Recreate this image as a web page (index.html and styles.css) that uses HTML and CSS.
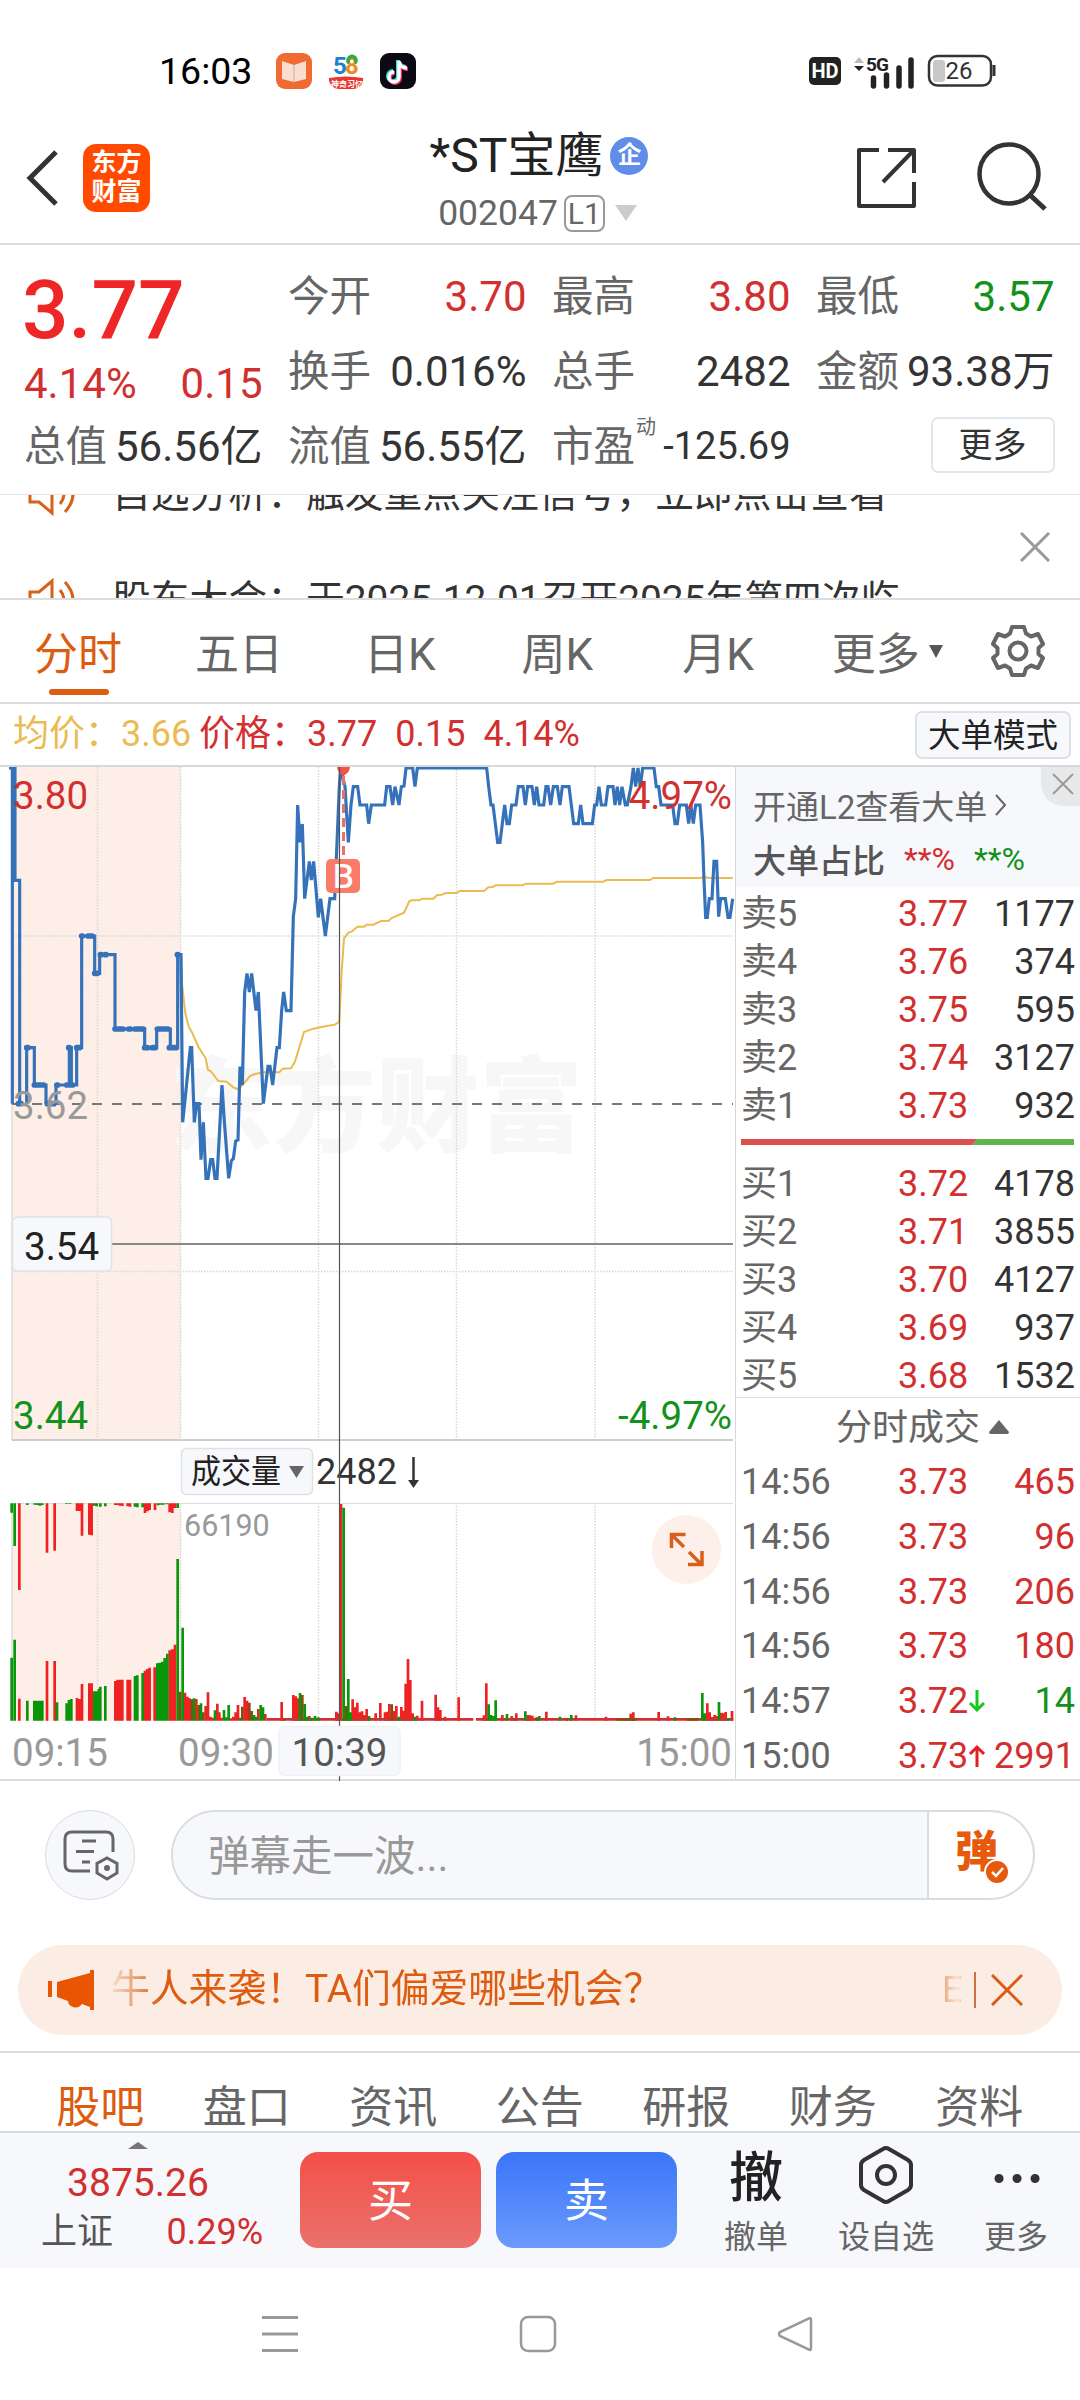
FILE: index.html
```html
<!DOCTYPE html>
<html lang="zh-CN">

<head>
    <meta charset="UTF-8">
    <meta name="viewport" content="width=device-width, initial-scale=1">
    <title>*ST宝鹰 002047</title>
    <link rel="stylesheet" href="styles.css">
</head>

<body>
    <div class="statusbar">
        <span class="clock">16:03</span>
        <svg class="appicon" width="36" height="36" viewBox="0 0 36 36">
            <rect width="36" height="36" rx="9" fill="#f26a33"/>
            <path d="M6 8l12 4 12-4v18l-12 3-12-3z" fill="#f9ded0"/>
            <path d="M18 12v17" stroke="#e3b8a4" stroke-width="1.5"/>
        </svg>
        <svg class="appicon" width="36" height="36" viewBox="0 0 36 36">
            <text x="5" y="21" font-size="24" font-weight="700" fill="#1f7fd0">5</text>
            <text x="17" y="21" font-size="24" font-weight="700" fill="#f08a1c">8</text>
            <path d="M21 10a4 4 0 1 1 6 0" fill="none" stroke="#2fae3f" stroke-width="3.500"/>
            <path d="M1 25q17-3 34 0v3q-3 8-10 8H11q-7 0-10-8z" fill="#e8382b"/>
            <text x="3" y="33.500" font-size="8" font-weight="700" fill="#fff">神奇习忆</text>
        </svg>
        <svg class="appicon" width="36" height="36" viewBox="0 0 36 36">
            <rect width="36" height="36" rx="9" fill="#0b0a14"/>
            <g fill="none" stroke-width="4">
                <path d="M18 7v16a5 5 0 1 1-5-5M18 8q2 6 8 6" stroke="#35e0dc"/>
                <path d="M20 9v16a5 5 0 1 1-5-5M20 10q2 6 8 6" stroke="#f0325a"/>
                <path d="M19 8v16a5 5 0 1 1-5-5M19 9q2 6 8 6" stroke="#fff" stroke-width="3.500"/>
            </g>
        </svg>
        <div class="phone">
            <span class="hd">HD</span>
            <svg width="62" height="38" viewBox="851 50 62 38">
                <path d="M857 55l5 6h-10z" fill="#bbb"/>
                <path d="M857 69l5-5h-10z" fill="#222"/>
                <path d="M871.500 76v8M884.500 73v11M897 66v18M909 58v26" stroke="#222" stroke-width="5.500" stroke-linecap="round"/>
                <text x="864" y="69" font-size="19" font-weight="700" fill="#222" textLength="23">5G</text>
            </svg>
            <svg width="70" height="34" viewBox="927 54 70 34">
                <rect x="933" y="60" width="12" height="22" rx="3" fill="#c8c8c8"/>
                <rect x="929" y="56" width="62" height="29.500" rx="8.500" fill="none" stroke="#333" stroke-width="2.500"/>
                <path d="M994 65v11" stroke="#333" stroke-width="3"/>
                <text x="959" y="79" font-size="24" text-anchor="middle" fill="#333">26</text>
            </svg>
        </div>
    </div>

    <header class="topbar">
        <svg class="back" width="36" height="60" viewBox="0 0 36 60"><path d="M32 4L6 30l26 26" fill="none" stroke="#333" stroke-width="5"/></svg>
        <div class="logo">东方<br>财富</div>
        <div class="stock">
            <h1>*ST宝鹰<span class="badge">企</span></h1>
            <div class="code">002047<span class="level">L1</span><svg width="22" height="16" viewBox="0 0 22 16"><path d="M0 0h22L11 16z" fill="#ccc"/></svg></div>
        </div>
        <svg class="share" width="64" height="64" viewBox="854 145 64 64">
            <path d="M879 150h-20v56h55v-24M888 150h26v23M914 150l-31 32" fill="none" stroke="#333" stroke-width="4" stroke-linejoin="round"/>
        </svg>
        <svg class="search" width="72" height="72" viewBox="976 140 72 72">
            <circle cx="1009" cy="174" r="29.500" fill="none" stroke="#333" stroke-width="4.500"/>
            <path d="M1030 195l15 14" stroke="#333" stroke-width="5"/>
        </svg>
    </header>

    <section class="quote">
        <div class="now">
            <div class="price">3.77</div>
            <div class="change red"><span>4.14%</span><span>0.15</span></div>
        </div>
        <div class="cell"><label>今开</label><b class="red">3.70</b></div>
        <div class="cell"><label>最高</label><b class="red">3.80</b></div>
        <div class="cell"><label>最低</label><b class="green">3.57</b></div>
        <div class="cell"><label>换手</label><b>0.016%</b></div>
        <div class="cell"><label>总手</label><b>2482</b></div>
        <div class="cell"><label>金额</label><b>93.38万</b></div>
        <div class="cell"><label>总值</label><b>56.56亿</b></div>
        <div class="cell"><label>流值</label><b>56.55亿</b></div>
        <div class="cell"><label>市盈<sup>动</sup></label><b class="small">-125.69</b></div>
        <div class="cell end"><span class="morebtn">更多</span></div>
    </section>

    <section class="news">
        <div class="newslist">
            <div class="newsrow">
                <svg width="54" height="44" viewBox="0 0 54 44"><path d="M3 14h9L25 3v38L12 30H3zM33 12q8 10 0 20M38 4q16 18 0 36" fill="none" stroke="#d9601a" stroke-width="3"/></svg>
                <span>自选分析：触发重点关注信号，立即点击查看</span>
            </div>
            <div class="newsrow">
                <svg width="54" height="44" viewBox="0 0 54 44"><path d="M3 14h9L25 3v38L12 30H3zM33 12q8 10 0 20M38 4q16 18 0 36" fill="none" stroke="#d9601a" stroke-width="3"/></svg>
                <span>股东大会：于2025-12-01召开2025年第四次临</span>
            </div>
        </div>
        <svg class="close" width="30" height="30" viewBox="0 0 30 30"><path d="M1 1l28 28M29 1L1 29" stroke="#999" stroke-width="3"/></svg>
    </section>

    <nav class="periods">
        <span class="active">分时</span>
        <span>五日</span>
        <span>日K</span>
        <span>周K</span>
        <span>月K</span>
        <span>更多<svg width="14" height="13" viewBox="0 0 14 13"><path d="M0 0h14L7 13z" fill="#555"/></svg></span>
        <svg class="gear" width="54" height="54" viewBox="-27 -27 54 54">
            <path d="M-6-24H6L8-17.500 13-14.500 20-17 25-7 20.500-3V3L25 7 20 17 13 14.500 8 17.500 6 24H-6L-8 17.500-13 14.500-20 17-25 7-20.500 3V-3L-25-7-20-17-13-14.500-8-17.500z" fill="none" stroke="#666" stroke-width="4" stroke-linejoin="round"/>
            <circle r="8.500" fill="none" stroke="#666" stroke-width="4"/>
        </svg>
    </nav>

    <div class="legend">
        <span class="avg">均价：3.66</span>
        <span class="cur">价格：3.77</span>
        <span class="cur">0.15</span>
        <span class="cur">4.14%</span>
        <span class="modebtn">大单模式</span>
    </div>

    <main class="board">
        <svg class="chart" width="735" height="1014" viewBox="0 767 735 1014">
            <rect x="12" y="767" width="169" height="673" fill="#fdeee7"/>
            <rect x="12" y="1503" width="169" height="218" fill="#fdeee7"/>
            <text x="169" y="1144" font-size="103" font-weight="900" fill="#f7f7f7" textLength="414" lengthAdjust="spacingAndGlyphs">东方财富</text>
            <g class="grid">
                <path d="M97.500 767V1440M180.500 767V1440M318.500 767V1440M456.500 767V1440M595 767V1440M12 936H733M12 1271.500H733"/>
                <path d="M97.500 1503V1720M180.500 1503V1720M318.500 1503V1720M456.500 1503V1720M595 1503V1720"/>
            </g>
            <path d="M12 767V1440M12 1503V1720" stroke="#ddd" stroke-width="1.500"/>
            <path d="M12 1440H733" stroke="#ccc" stroke-width="2"/>
            <path d="M12 1503.500H733" stroke="#ddd"/>
            <path d="M12 1104H733" stroke="#777" stroke-width="1.800" stroke-dasharray="10 10"/>

            <!-- average and price lines, three units per pixel -->
            <g class="lines" transform="translate(0 750) scale(.33333)">
                <path class="avgline" d="M543 614L546 700 556 790 566 830 575 845 595 890 617 925 624 960 632 963 655 993 680 995 700 1012 712 1017 725 1008 750 978 765 972 790 967 838 967 848 956 873 955 885 935 912 846 940 836 965 831 985 827 1005 824 1018 815 1025 665 1032 565 1045 548 1055 545 1072 530 1092 530 1100 524 1120 524 1143 513 1165 513 1175 504 1212 488 1228 454 1235 451 1258 451 1266 446 1300 446 1312 435 1325 434 1338 429 1370 429 1380 423 1452 423 1465 412 1478 411 1488 406 1568 406 1578 401 1660 401 1670 395 1810 395 1820 390 1950 390 1960 384 2100 384 2115 381 2125 384 2198 384"/>
                <path class="priceline" d="M27 54H37V1061H37V54H45V391H59V1061M80 1061V893H103V1005H138V1061M168 1061V1005H208V893H214V1005H230V893H245V558H284V670H299V614H345V837H434V893H470V837H511V893H533V614H543L548 1117 556 1040 571 893H575L583 1117 590 1061H597L603 1229 610 1117 618 1285H624L632 1229H638L645 1285H651L660 1117 666 1005 672 1100 686 1285 694 1232 700 1226 707 1173 714 1170 720 950 727 1005 734 726 741 670 748 726 755 670 768 782 775 726 790 1061 804 949H810L818 1005 831 893H838L845 782 851 726 859 782H873L880 500 887 446 893 165 900 277 907 222 914 446 928 334 934 390 941 334 955 502 962 446 976 558 990 446H1004L1018 110 1022 54 1035 110 1045 277 1053 165 1060 110H1073L1080 165H1100L1106 221 1114 165H1154L1160 110H1170L1178 165 1185 110 1197 165 1204 110 1212 108 1218 54H1238L1245 110 1252 54H1460L1466 110 1473 165H1479L1486 221 1493 277H1500L1507 221 1514 165 1521 221H1528L1535 165H1548L1555 110H1569L1576 165 1583 110H1596L1603 165 1610 110 1617 165H1631L1638 110H1644L1652 165 1660 110H1672L1680 165 1687 110H1707L1714 165 1721 221H1735L1742 165 1749 221H1777L1784 165H1790L1797 110 1804 165H1817L1824 110H1839L1845 165 1852 110 1859 165 1866 110 1876 165H1882L1893 110 1900 54 1907 110 1914 54 1921 110 1928 54H1962L1969 110H1976L1983 165H2018L2025 221H2032L2039 165H2059L2066 221 2073 165 2080 221 2087 165H2100L2108 277 2112 390 2117 502H2122L2128 446H2136L2142 334H2150L2156 500 2162 446H2176L2184 502H2190L2198 446"/>
                <path class="ticks" d="M55 1061h8M80 893h4M103 1005h28M142 1061h20M171 1005h2M200 1005h18M206 893h2M230 893h8M245 558h2M264 558h12M284 670h8M301 614h3M316 614h2M345 837h24M386 837h5M405 837h25M434 893h8M457 893h8M472 837h32M508 893h20M532 614h2"/>
            </g>

            <!-- volume bars, same scale -->
            <g class="bars" transform="translate(0 1490) scale(.33333)">
                <path stroke="#ee2222" d="M58 692V626M141 692V513M164 692V513M231 692V624M238 692V627M246 692V582M268 692V580M275 692V580M346 692V573M353 692V569M360 692V569M367 692V569M383 692V569M390 692V569M435 692V542M442 692V537M449 692V533M464 692V532M509 692V481M517 692V478M525 692V464M58 40V300M141 40V188M164 40V182M231 40V63M238 40V63M246 40V137M268 40V134M275 40V136M346 40V45M353 40V45M360 40V47M367 40V48M383 40V49M390 40V50M435 40V69M442 40V64M449 40V60M465 40V60M509 40V67M517 40V69M525 40V54M555 692V608M562 692V620M569 692V625M589 692V627M617 692V648M624 692V607M631 692V680M638 692V683M652 692V641M658 692V667M665 692V683M693 692V685M700 692V680M707 692V667M714 692V645M734 692V621M741 692V632M775 692V657M796 692V672M845 692V636M880 692V615M887 692V619M893 692V625M928 692V678M1009 692V665M1016 692V670M1023 692V42M1058 692V628M1065 692V652M1072 692V638M1079 692V667M1086 692V664M1093 692V675M1100 692V657M1107 692V678M1127 692V670M1141 692V639M1155 692V667M1161 692V665M1168 692V642M1182 692V663M1189 692V648M1204 692V651M1210 692V662M1217 692V581M1224 692V507M1231 692V570M1238 692V670M1252 692V677M1266 692V632M1307 692V614M1314 692V652M1321 692V660M1335 692V680M1376 692V622M1452 692V676M1459 692V580M1507 692V675M1535 692V678M1549 692V670M1583 692V675M1590 692V676M1597 692V677M1639 692V665M1728 692V676M1818 692V680M1892 692V671M1900 692V667M1976 692V666M2004 692V679M2122 692V640M2129 692V667M2136 692V681M2144 692V675M2151 692V678M2164 692V668M2171 692V670M2177 692V666M2196 692V663"/>
                <path stroke="#d03030" d="M800 688H1420M1428 688H2200" />
                <path stroke="#8a4a10" d="M541 692V605M575 692V628M596 692V645M610 692V667M727 692V650M748 692V638M755 692V663M907 692V615M1038 692V648M1175 692V643M852 692V685M1545 692V685M1610 692V682M1700 692V685M1850 688h60M2060 688h35"/>
                <path stroke="#0a960a" d="M35 692V503M44 692V449M82 692V632M103 692V632M111 692V632M119 692V632M127 692V632M171 692V637M200 692V640M207 692V630M214 692V627M283 692V604M290 692V604M297 692V596M301 692V590M316 692V588M405 692V558M412 692V556M428 692V549M472 692V520M479 692V518M487 692V515M494 692V504M502 692V491M533 692V207M548 692V413M582 692V625M603 692V640M645 692V661M672 692V660M679 692V682M686 692V645M721 692V683M762 692V675M768 692V680M782 692V645M789 692V652M900 692V609M914 692V642M921 692V680M935 692V683M945 692V678M955 692V682M1031 692V53M1045 692V567M1052 692V667M1107 692V680M1197 692V680M1245 692V680M1466 692V643M1473 692V675M1480 692V678M1487 692V631M1521 692V672M1576 692V664M1618 692V678M1680 692V680M1714 692V675M2025 692V682M2107 692V609M2114 692V670M2157 692V636M2184 692V684M35 40V68M44 40V168M82 40V45M104 40V44M112 40V45M120 40V47M127 40V45M200 40V42M210 40V42M283 40V47M290 40V49M301 40V50M316 40V49M405 40V50M412 40V52M428 40V52M474 40V46M482 40V44M490 40V44M500 40V43M533 40V54"/>
            </g>

            <text class="axis red" x="13" y="809">3.80</text>
            <text class="axis red" x="732" y="809" text-anchor="end">4.97%</text>
            <text class="axis gray" x="13" y="1118.500">3.62</text>
            <text class="axis green" x="13" y="1428.500">3.44</text>
            <text class="axis green" x="732" y="1428.500" text-anchor="end">-4.97%</text>

            <path d="M343.500 776V858" stroke="#e5736b" stroke-width="3" stroke-dasharray="9 5"/>
            <path d="M337 767h13q0 5-6.500 9-6.500-4-6.500-9z" fill="#ef5548"/>
            <rect x="326" y="859" width="34" height="34" rx="5" fill="#fb7b6b"/>
            <text x="343.500" y="887.500" font-size="33" font-weight="500" fill="#fff" text-anchor="middle">B</text>

            <rect class="tag" x="181.500" y="1448.500" width="131" height="46" rx="5"/>
            <text x="191" y="1483" font-size="33" fill="#222" textLength="90" lengthAdjust="spacingAndGlyphs">成交量</text>
            <path d="M289 1466h15l-7.500 12z" fill="#666"/>
            <text x="316" y="1484" font-size="36" fill="#333">2482</text>
            <path d="M413.500 1457v26" stroke="#333" stroke-width="2.500"/>
            <path d="M408 1480h11l-5.500 8z" fill="#333"/>
            <text x="184" y="1536" font-size="30.500" fill="#999">66190</text>

            <path d="M112 1244H733" stroke="#888" stroke-width="2"/>
            <path d="M339.500 767V1781" stroke="#555" stroke-width="1.200"/>
            <rect class="tag" x="12.500" y="1217" width="99" height="54" rx="5"/>
            <text class="axis" x="24" y="1259.500" fill="#222">3.54</text>

            <text class="axis gray" x="12" y="1766">09:15</text>
            <text class="axis gray" x="178" y="1766">09:30</text>
            <rect class="tag light" x="279" y="1726.500" width="121" height="49" rx="6"/>
            <text class="axis" x="339.500" y="1766" text-anchor="middle" fill="#555">10:39</text>
            <text class="axis gray" x="732" y="1766" text-anchor="end">15:00</text>

            <circle cx="686.500" cy="1549.500" r="34.500" fill="#fdf0ea"/>
            <path d="M671.500 1548v-13.500h14M672 1535l12 12M702 1551v13.500h-14M701 1564l-12-12" fill="none" stroke="#d95f1c" stroke-width="3.500"/>
        </svg>

        <aside class="side">
            <div class="promo">
                <div class="l2">开通L2查看大单<svg width="12" height="22" viewBox="0 0 12 22"><path d="M1 1l9 10-9 10" fill="none" stroke="#666" stroke-width="2"/></svg></div>
                <div class="ratio">大单占比<span class="red">**%</span><span class="green">**%</span></div>
                <span class="promoclose"><svg width="22" height="22" viewBox="0 0 22 22"><path d="M1 1l20 20M21 1L1 21" stroke="#999" stroke-width="2"/></svg></span>
            </div>
            <div class="orders">
                <div><i>卖5</i><b>3.77</b><u>1177</u></div>
                <div><i>卖4</i><b>3.76</b><u>374</u></div>
                <div><i>卖3</i><b>3.75</b><u>595</u></div>
                <div><i>卖2</i><b>3.74</b><u>3127</u></div>
                <div><i>卖1</i><b>3.73</b><u>932</u></div>
            </div>
            <svg class="balance" width="333" height="6" viewBox="0 0 333 6"><path d="M0 0h237l-6 6H0z" fill="#d9504e"/><path d="M237 0h96v6H231z" fill="#62b34c"/></svg>
            <div class="orders">
                <div><i>买1</i><b>3.72</b><u>4178</u></div>
                <div><i>买2</i><b>3.71</b><u>3855</u></div>
                <div><i>买3</i><b>3.70</b><u>4127</u></div>
                <div><i>买4</i><b>3.69</b><u>937</u></div>
                <div><i>买5</i><b>3.68</b><u>1532</u></div>
            </div>
            <div class="dealtitle">分时成交<svg width="20" height="15" viewBox="0 0 20 15"><path d="M10 0l10 12q0 2-2 2H2q-2 0-2-2z" fill="#666"/></svg></div>
            <div class="orders deals">
                <div><i>14:56</i><b>3.73</b><u class="red">465</u></div>
                <div><i>14:56</i><b>3.73</b><u class="red">96</u></div>
                <div><i>14:56</i><b>3.73</b><u class="red">206</u></div>
                <div><i>14:56</i><b>3.73</b><u class="red">180</u></div>
                <div><i>14:57</i><b>3.72</b><svg width="18" height="24" viewBox="0 0 18 24"><path d="M9 1v20M2 14l7 7 7-7" fill="none" stroke="#14c81e" stroke-width="3"/></svg><u class="green">14</u></div>
                <div><i>15:00</i><b>3.73</b><svg width="18" height="24" viewBox="0 0 18 24"><path d="M9 23V3M2 10l7-7 7 7" fill="none" stroke="#e02020" stroke-width="3"/></svg><u class="red">2991</u></div>
            </div>
        </aside>
    </main>

    <section class="danmu">
        <div class="roundbtn">
            <svg width="58" height="58" viewBox="62 1828 58 58">
                <path d="M91 1873H73q-7 0-7-7v-25q0-7 7-7h34q7 0 7 7v13M83 1843h14M77 1853.500h18M83 1864h8" fill="none" stroke="#666" stroke-width="3"/>
                <path d="M108 1860l10 5.500v9.500l-10 6-10-6v-9.500z" fill="none" stroke="#666" stroke-width="3"/>
                <circle cx="108" cy="1870" r="3" fill="#666"/>
            </svg>
        </div>
        <div class="danmubar">
            <span class="placeholder">弹幕走一波...</span>
            <span class="toggle">弹<svg width="26" height="26" viewBox="0 0 26 26"><circle cx="13" cy="13" r="12" fill="#e65a0c" stroke="#fff" stroke-width="2"/><path d="M8 13l4 4 7-8" fill="none" stroke="#fff" stroke-width="2.500"/></svg></span>
        </div>
    </section>

    <section class="banner">
        <svg width="46" height="40" viewBox="0 0 46 40"><path d="M0 11h4v16H0zM9 12L42 3V0h4v40h-4v-3l-8-3q-4 5-9 3-5-2-5-6L9 27z" fill="#ea5504"/></svg>
        <span class="bannertext">牛人来袭！TA们偏爱哪些机会？</span>
        <span class="next">E</span>
        <svg class="bannerclose" width="32" height="32" viewBox="0 0 32 32"><path d="M1 1l30 30M31 1L1 31" stroke="#dd5a12" stroke-width="3"/></svg>
    </section>

    <nav class="subtabs">
        <span class="active">股吧</span>
        <span>盘口</span>
        <span>资讯</span>
        <span>公告</span>
        <span>研报</span>
        <span>财务</span>
        <span>资料</span>
    </nav>

    <footer class="bottombar">
        <div class="index">
            <svg width="20" height="7" viewBox="0 0 20 7"><path d="M10 0l10 7H0z" fill="#777"/></svg>
            <div class="point">3875.26</div>
            <div class="indexrow"><span>上证</span><span class="red">0.29%</span></div>
        </div>
        <div class="trade buy">买</div>
        <div class="trade sell">卖</div>
        <div class="tool"><span class="cancel">撤</span><label>撤单</label></div>
        <div class="tool wide">
            <svg width="56" height="62" viewBox="-28 -31 56 62"><path d="M-3-26q3-2 6 0L22-15q3 2 3 5V10q0 3-3 5L3 26q-3 2-6 0L-22 15q-3-2-3-5V-10q0-3 3-5z" fill="none" stroke="#333" stroke-width="4"/><circle r="9" fill="none" stroke="#333" stroke-width="4"/></svg>
            <label>设自选</label>
        </div>
        <div class="tool"><svg width="56" height="62" viewBox="-28 -31 56 62"><path d="M-17 3.500h.1M1 3.500h.1M19 3.500h.1" stroke="#333" stroke-width="9" stroke-linecap="round"/></svg><label>更多</label></div>
    </footer>

    <div class="sysnav">
        <svg width="38" height="38" viewBox="0 0 38 38"><path d="M1 2.500h36M1 19h36M1 35.500h36" stroke="#999" stroke-width="3"/></svg>
        <svg width="38" height="38" viewBox="0 0 38 38"><rect x="2" y="2" width="34" height="34" rx="7" fill="none" stroke="#999" stroke-width="2.500"/></svg>
        <svg width="38" height="38" viewBox="0 0 38 38"><path d="M33 3.500q2-1.500 2 1.500v28q0 3-2 1.500L4 21q-2-2 0-4z" fill="none" stroke="#999" stroke-width="2.500"/></svg>
    </div>
</body>

</html>
```

FILE: styles.css
```css
* {
    box-sizing: border-box;
}

body {
    margin: 0;
    width: 1080px;
    height: 2400px;
    overflow: hidden;
    background-color: #fff;
    color: #333;
    font-family: Roboto, 'Noto Sans CJK SC', sans-serif;
    white-space: nowrap;
}

svg {
    display: block;
    flex: none;
}

h1,
b {
    font-weight: 400;
    margin: 0;
}

i,
u {
    font-style: normal;
    text-decoration: none;
}

.red {
    color: #d22f2f;
    fill: #d22f2f;
}

.green {
    color: #14911a;
    fill: #14911a;
}

.gray {
    fill: #999;
}

/* status bar */
.statusbar {
    display: flex;
    align-items: center;
    height: 142px;
    padding: 0 83px 0 159px;
}

.clock {
    width: 117px;
    font-size: 37.5px;
    color: #000;
}

.appicon {
    margin-right: 16px;
}

.phone {
    display: flex;
    align-items: center;
    gap: 12px;
    margin-left: auto;
}

.hd {
    width: 32px;
    height: 28px;
    border-radius: 5px;
    background-color: #222;
    color: #fff;
    font-size: 20px;
    font-weight: 700;
    line-height: 28px;
    text-align: center;
}

/* header */
.topbar {
    display: flex;
    height: 103px;
    border-bottom: 2px solid #ddd;
    padding-left: 24px;
}

.back {
    margin-top: 6px;
}

.logo {
    width: 67px;
    height: 68px;
    margin: 2px 0 0 23px;
    padding-top: 4px;
    border-radius: 13px;
    background-color: #ff4a00;
    color: #fff;
    font-size: 25px;
    font-weight: 700;
    line-height: 29px;
    text-align: center;
}

.stock {
    display: flex;
    flex-direction: column;
    align-items: center;
    width: 640px;
    height: 110px;
    margin: -14px 0 0 69px;
}

.stock h1 {
    display: flex;
    align-items: center;
    gap: 7px;
    height: 57px;
    font-size: 48px;
    line-height: 56px;
    color: #222;
}

.badge {
    width: 38px;
    height: 38px;
    border-radius: 50%;
    background-color: #5f8de8;
    color: #fff;
    font-size: 24px;
    font-weight: 700;
    line-height: 36px;
    text-align: center;
}

.code {
    display: flex;
    align-items: center;
    height: 54px;
    margin-top: 4px;
    margin-right: 3px;
    font-size: 35.500px;
    color: #666;
}

.level {
    width: 41px;
    height: 37px;
    margin: 0 10px 0 6px;
    border: 2px solid #999;
    border-radius: 8px;
    font-size: 30px;
    line-height: 33px;
    text-align: center;
}

.share {
    margin: 3px 0 0 -5px;
}

.search {
    margin: -2px 0 0 58px;
}

/* quote */
.quote {
    display: grid;
    grid-template-columns: repeat(4, 238.500px);
    grid-template-rows: repeat(3, 75px);
    column-gap: 25.500px;
    height: 250px;
    padding: 14px 25px 0 24px;
    border-bottom: 1px solid #e6e6e6;
    font-size: 42px;
}

.now {
    grid-row: span 2;
}

.price {
    height: 90px;
    margin-left: -2px;
    padding-top: 8px;
    font-size: 82px;
    font-weight: 500;
    line-height: 86px;
    color: #ee2626;
}

.change {
    display: flex;
    justify-content: space-between;
    padding-top: 9px;
    line-height: 52px;
    font-size: 42px;
}

.cell {
    display: flex;
    justify-content: space-between;
    align-items: center;
    height: 75px;
    line-height: 75px;
}

.cell label {
    position: relative;
    color: #666;
    font-size: 41.5px;
}

.cell sup {
    position: absolute;
    left: 84px;
    top: -19px;
    font-size: 20px;
}

.cell .small {
    font-size: 38px;
}

.cell.end {
    justify-content: flex-end;
}

.morebtn {
    width: 124px;
    height: 56px;
    border: 2px solid #e3e6ea;
    border-radius: 7px;
    margin-top: -4px;
    font-size: 34px;
    line-height: 52px;
    text-align: center;
}

/* news ticker */
.news {
    display: flex;
    align-items: center;
    height: 105px;
    overflow: hidden;
    padding: 0 30px 0 27px;
    border-bottom: 2px solid #ddd;
    font-size: 38.8px;
}

.newslist {
    display: flex;
    flex-direction: column;
    gap: 46px;
    flex: 1;
}

.newsrow {
    display: flex;
    align-items: center;
    gap: 31px;
    height: 60px;
    line-height: 60px;
}

/* period tabs */
.periods {
    display: flex;
    align-items: center;
    height: 104px;
    padding-left: 34px;
    border-bottom: 2px solid #ddd;
    font-size: 44px;
    color: #666;
}

.periods span {
    position: relative;
    display: flex;
    align-items: center;
    height: 102px;
    margin-right: 73px;
}

.periods span:nth-child(2) {
    margin-right: 81px;
}

.periods span:nth-child(3) {
    margin-right: 86px;
}

.periods span:nth-child(4) {
    margin-right: 89px;
}

.periods span:nth-child(5) {
    margin-right: 78px;
}

.periods span:nth-child(6) {
    margin-right: 48px;
    gap: 9px;
}

.periods .active,
.subtabs .active {
    color: #dc5c12;
}

.periods .active::after {
    content: '';
    position: absolute;
    left: 15px;
    bottom: 7px;
    width: 60px;
    height: 6px;
    border-radius: 3px;
    background-color: #dc5c12;
}

/* legend */
.legend {
    display: flex;
    align-items: center;
    height: 63px;
    padding: 0 9px 0 13px;
    border-bottom: 2px solid #d8d8d8;
    font-size: 36px;
    line-height: 61px;
}

.avg {
    width: 186px;
    color: #eabb52;
}

.cur {
    margin-right: 18px;
    color: #d22f2f;
}

.modebtn {
    width: 156px;
    height: 48px;
    margin: 1px 0 0 auto;
    border: 2px solid #dde0e4;
    border-radius: 7px;
    background-color: #f7f8fb;
    color: #222;
    font-size: 32.500px;
    line-height: 46px;
    text-align: center;
}

/* chart board */
.board {
    display: flex;
    height: 1014px;
    border-bottom: 2px solid #ddd;
}

.grid path {
    fill: none;
    stroke: #d8d8d8;
    stroke-width: 1.5;
    stroke-dasharray: 1.5 1.5;
}

.avgline {
    fill: none;
    stroke: #ebbb4f;
    stroke-width: 6;
}

.priceline {
    fill: none;
    stroke: #3672ba;
    stroke-width: 9.5;
}

.ticks {
    fill: none;
    stroke: #3672ba;
    stroke-width: 17;
    stroke-linecap: round;
}

.bars path {
    fill: none;
    stroke-width: 8;
}

.axis {
    font-size: 38.5px;
}

.tag {
    fill: #f7f8fb;
    stroke: #dfe2e5;
    stroke-width: 1.5;
}

.tag.light {
    stroke: #f0f1f4;
}

.side {
    width: 345px;
    height: 1012px;
    border-left: 1px solid #d5d8dc;
}

.promo {
    position: relative;
    height: 120px;
    padding: 10px 0 0 17px;
    background-color: #f7f8fb;
    color: #666;
    font-size: 33px;
}

.l2 {
    display: flex;
    align-items: center;
    gap: 8px;
    height: 55px;
}

.ratio {
    display: flex;
    align-items: center;
    height: 54px;
    color: #555;
    font-weight: 500;
}

.ratio span {
    margin-left: 19px;
    font-size: 32px;
    font-weight: 400;
}

.promoclose {
    position: absolute;
    right: 0;
    top: 0;
    width: 39px;
    height: 39px;
    padding: 6px 0 0 11px;
    border-radius: 0 0 0 22px;
    background-color: #e7e8ea;
}

.orders {
    padding: 3px 5px 0 5px;
    font-size: 36px;
}

.orders div {
    display: grid;
    grid-template-columns: 157px 72px 1fr;
    align-items: center;
    height: 48px;
    line-height: 48px;
}

.orders i {
    color: #666;
}

.orders b {
    color: #d22f2f;
}

.orders u {
    text-align: right;
}

.balance {
    margin: 9px 0 12px 5px;
}

.dealtitle {
    display: flex;
    align-items: center;
    gap: 9px;
    height: 60px;
    margin-top: -3px;
    padding-left: 100px;
    border-top: 1px solid #ddd;
    color: #666;
    font-size: 36px;
    line-height: 56px;
}

.deals {
    padding-top: 0;
    margin-top: -2px;
}

.deals div {
    height: 54.7px;
}

.deals div:nth-child(n+5) {
    grid-template-columns: 157px 70px 18px 1fr;
}

/* danmu input */
.danmu {
    display: flex;
    gap: 36px;
    height: 164px;
    padding: 29px 45px 0;
}

.roundbtn {
    display: flex;
    justify-content: center;
    align-items: center;
    width: 90px;
    height: 90px;
    border: 1.5px solid #d9dce2;
    border-radius: 50%;
    background-color: #f7f8fb;
}

.danmubar {
    display: flex;
    flex: 1;
    height: 90px;
    border: 2px solid #d9dce2;
    border-radius: 45px;
    overflow: hidden;
    line-height: 89px;
}

.placeholder {
    flex: 1;
    padding-left: 35px;
    background-color: #f7f8fb;
    color: #999;
    font-size: 41.5px;
}

.toggle {
    position: relative;
    width: 106px;
    padding-left: 26px;
    border-left: 2px solid #d9dce2;
    color: #e65a0c;
    font-size: 43px;
    font-weight: 900;
    line-height: 80px;
}

.toggle svg {
    position: absolute;
    left: 55px;
    top: 47px;
}

/* banner */
.banner {
    display: flex;
    align-items: center;
    height: 90px;
    margin: 0 18px;
    padding: 0 39px 0 30px;
    border-radius: 45px;
    background-color: #fcede4;
    color: #dc5c12;
    font-size: 38.8px;
}

.bannertext {
    flex: 1;
    height: 90px;
    margin-left: 17px;
    line-height: 88px;
    mask-image: linear-gradient(to right, rgba(0, 0, 0, .1), #000 50px);
}

.next {
    width: 34px;
    height: 36px;
    border-right: 2px solid #c9713f;
    line-height: 36px;
    font-size: 36px;
    mask-image: linear-gradient(to right, rgba(0, 0, 0, .5), rgba(0, 0, 0, .05) 16px, #000 30px);
}

.bannerclose {
    margin-left: 15px;
}

/* sub tabs */
.subtabs {
    display: flex;
    height: 82px;
    margin-top: 16px;
    padding: 0 27px;
    border-top: 2px solid #ddd;
    border-bottom: 2px solid #d5d8dc;
    font-size: 44px;
    line-height: 110px;
    color: #666;
}

.subtabs span {
    width: 146.5px;
    text-align: center;
    flex: none;
}

/* bottom bar */
.bottombar {
    display: flex;
    height: 135px;
    background-color: #f7f8fb;
}

.index {
    display: flex;
    flex-direction: column;
    align-items: center;
    width: 276px;
    margin-right: 24px;
    padding-top: 9px;
}

.point {
    height: 52px;
    padding-top: 8px;
    font-size: 39px;
    line-height: 52px;
    color: #d22f2f;
}

.indexrow {
    display: flex;
    justify-content: space-between;
    align-self: stretch;
    padding: 0 13px 0 41px;
    font-size: 36px;
    line-height: 62px;
    color: #555;
}

.trade {
    width: 181px;
    height: 96px;
    margin: 19px 15px 0 0;
    border-radius: 18px;
    color: #fff;
    font-size: 45px;
    line-height: 100px;
    text-align: center;
}

.buy {
    background: linear-gradient(#f44f49, #eb716b);
}

.sell {
    background: linear-gradient(#3a76f8, #6c9afd);
}

.tool {
    display: flex;
    flex-direction: column;
    align-items: center;
    width: 128px;
    padding-top: 11px;
    font-size: 32px;
    color: #666;
}

.tool.wide {
    width: 132px;
}

.tool label {
    height: 60px;
    line-height: 62px;
}

.cancel {
    height: 62px;
    color: #222;
    font-size: 54px;
    font-weight: 500;
    line-height: 70px;
}

.sysnav {
    display: flex;
    justify-content: space-between;
    padding: 47px 266px 0 261px;
}
```
